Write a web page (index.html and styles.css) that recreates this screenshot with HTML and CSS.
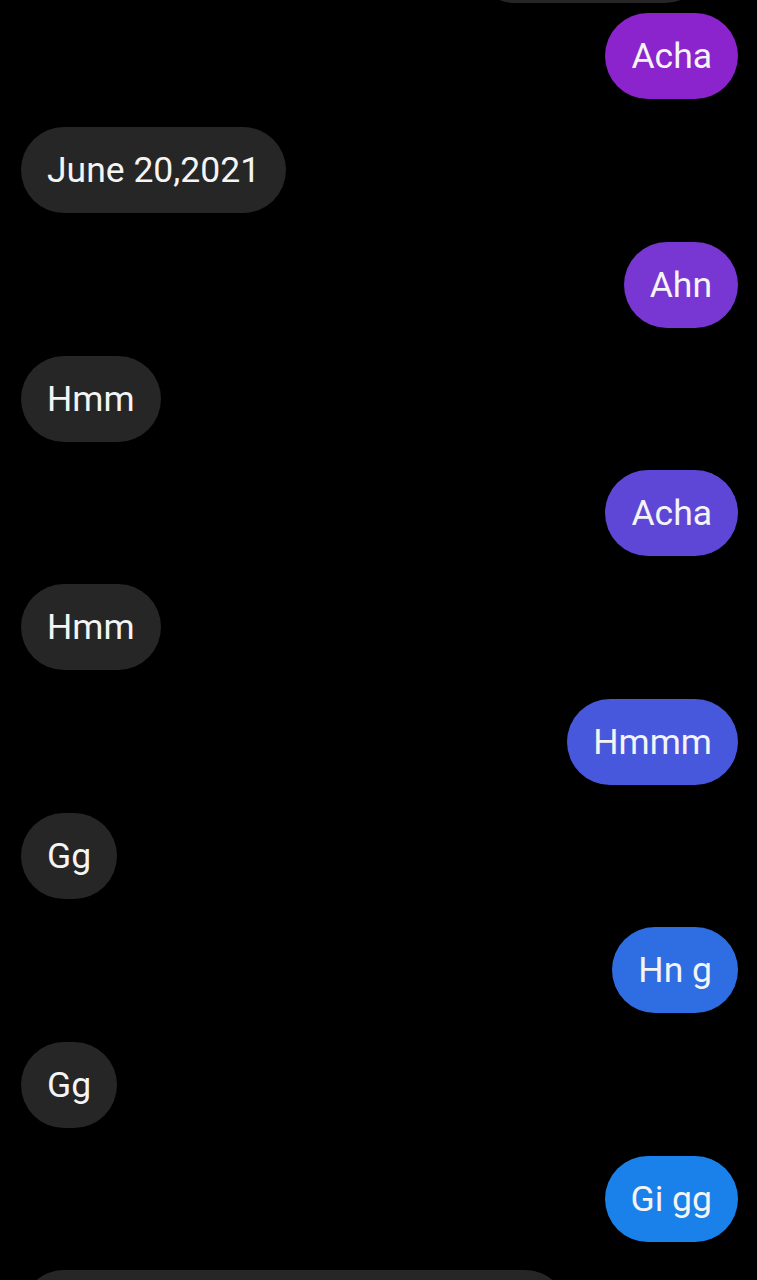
FILE: index.html
```html
<!DOCTYPE html>
<html>
<head>
<meta charset="utf-8">
<link rel="stylesheet" href="styles.css">
</head>
<body>
<div class="chat">
  <div class="bubble in partial-top"></div>
  <div class="bubble out c1">Acha</div>
  <div class="bubble in">June 20,2021</div>
  <div class="bubble out c2">Ahn</div>
  <div class="bubble in">Hmm</div>
  <div class="bubble out c3">Acha</div>
  <div class="bubble in">Hmm</div>
  <div class="bubble out c4">Hmmm</div>
  <div class="bubble in">Gg</div>
  <div class="bubble out c5">Hn g</div>
  <div class="bubble in">Gg</div>
  <div class="bubble out c6">Gi gg</div>
  <div class="bubble in partial-bottom"></div>
</div>
</body>
</html>
```
FILE: styles.css
```css
html, body {
  margin: 0;
  padding: 0;
  background: #000;
  height: 1280px;
  overflow: hidden;
}
.chat {
  display: flex;
  flex-direction: column;
  gap: 28.3px;
  padding: 0 19px 0 21px;
  font-family: Roboto, "Noto Sans", sans-serif;
}
.bubble {
  box-sizing: border-box;
  height: 86px;
  line-height: 86px;
  padding: 0 26px;
  border-radius: 43px;
  font-size: 35.5px;
  color: #f4f4f4;
  white-space: nowrap;
  flex: none;
}
.in {
  align-self: flex-start;
  background: #262626;
}
.out {
  align-self: flex-end;
}
.partial-top {
  align-self: flex-end;
  width: 236px;
  margin-top: -83px;
  margin-right: 30px;
  margin-bottom: -18.3px;
}
.partial-bottom {
  width: 547px;
}
.c1 { background: #8b24cc; }
.c2 { background: #7836d2; }
.c3 { background: #5e47d7; }
.c4 { background: #4858dc; }
.c5 { background: #2f6de2; }
.c6 { background: #1a80ea; }
```
